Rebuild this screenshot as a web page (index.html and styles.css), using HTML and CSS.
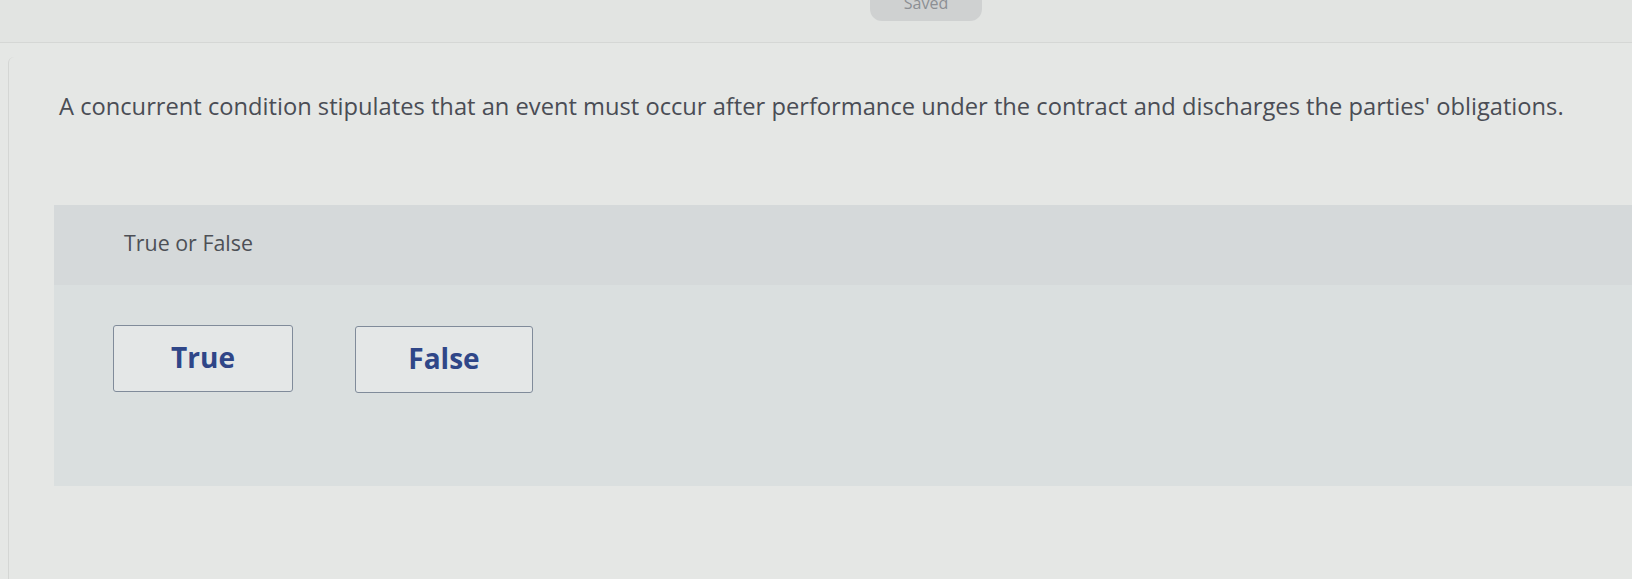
FILE: index.html
```html
<!DOCTYPE html>
<html lang="en">
<head>
<meta charset="utf-8">
<title>True or False</title>
<link rel="stylesheet" href="styles.css">
</head>
<body>
  <header class="topbar">
    <div class="saved-pill">Saved</div>
  </header>
  <main class="card">
    <p class="question">A concurrent condition stipulates that an event must occur after performance under the contract and discharges the parties' obligations.</p>
    <section class="answer-panel">
      <div class="panel-head">True or False</div>
      <div class="panel-body">
        <button class="choice choice-true" type="button">True</button>
        <button class="choice choice-false" type="button">False</button>
      </div>
    </section>
  </main>
</body>
</html>
```
FILE: styles.css
```css
html, body {
  margin: 0;
  padding: 0;
}
body {
  background: #e5e7e5;
  font-family: "Open Sans", Lato, "Liberation Sans", sans-serif;
  color: #4b4e55;
  height: 579px;
  overflow: hidden;
}
.topbar {
  height: 42px;
  border-bottom: 1px solid #d5d7d5;
  background: #e2e4e2;
  display: flex;
  padding-left: 870px;
  overflow: hidden;
}
.saved-pill {
  width: 112px;
  height: 32px;
  margin-top: -11px;
  border-radius: 12px;
  background: #cfd1d1;
  color: #8c8f94;
  font-size: 16px;
  display: flex;
  justify-content: center;
  align-items: flex-start;
  line-height: 16px;
  padding-top: 6px;
  box-sizing: border-box;
}
.card {
  margin-top: 14px;
  margin-left: 8px;
  border-left: 1px solid #d4d6d4;
  border-top-left-radius: 6px;
  min-height: 540px;
}
.question {
  margin: 0;
  padding: 34px 0 0 50px;
  font-size: 23.7px;
  line-height: 31px;
  white-space: nowrap;
  color: #4a4d55;
}
.answer-panel {
  margin-top: 83px;
  margin-left: 45px;
  background: #dadfdf;
}
.panel-head {
  height: 80px;
  background: #d5d9da;
  box-sizing: border-box;
  padding: 25px 0 0 70px;
  font-size: 21.4px;
  line-height: 26px;
  color: #4d5056;
}
.panel-body {
  height: 201px;
  box-sizing: border-box;
  padding: 40px 0 0 59px;
  display: flex;
  gap: 62px;
  align-items: flex-start;
}
.choice {
  height: 67px;
  background: #e4e7e7;
  border: 1.5px solid #808b9a;
  border-radius: 3px;
  font-family: "Open Sans", Lato, "Liberation Sans", sans-serif;
  font-weight: 700;
  font-size: 28px;
  line-height: 60px;
  padding: 0 0 4px;
  color: #2f4688;
}
.choice-true {
  width: 180px;
}
.choice-false {
  width: 178px;
  margin-top: 1px;
}
```
